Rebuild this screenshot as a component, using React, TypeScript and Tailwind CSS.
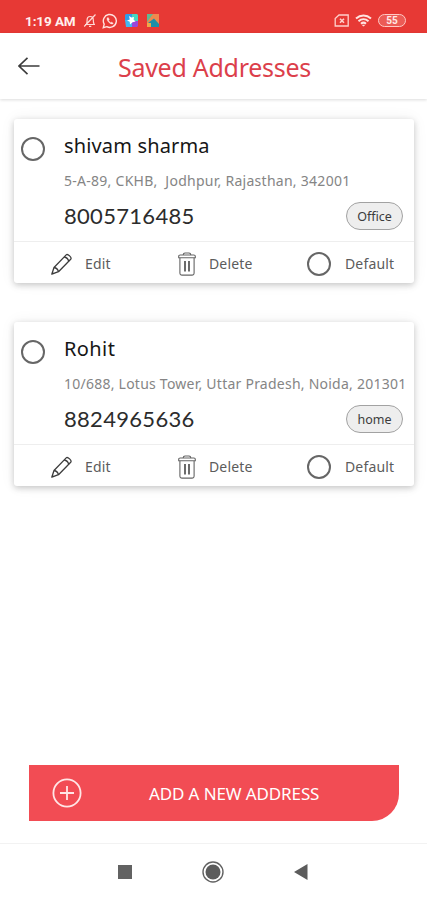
import React from "react";

type Address = {
  name: string;
  address: string;
  phone: string;
  tag: string;
  nameClass: string;
  addressClass: string;
};

const addresses: Address[] = [
  {
    name: "shivam sharma",
    address: "5-A-89, CKHB,\u00a0 Jodhpur, Rajasthan, 342001",
    phone: "8005716485",
    tag: "Office",
    nameClass: "tracking-[0.15px]",
    addressClass: "tracking-[0.27px]",
  },
  {
    name: "Rohit",
    address: "10/688, Lotus Tower, Uttar Pradesh, Noida, 201301",
    phone: "8824965636",
    tag: "home",
    nameClass: "tracking-[0.4px]",
    addressClass: "tracking-[0.24px]",
  },
];

const MutedBellIcon = () => (
  <svg className="h-[15px] w-[14px]" viewBox="0 0 14 15" fill="none" stroke="#ffd9d6" strokeWidth="1.2">
    <path d="M2 11.5h10M3.5 11c.6-1 .6-2 .6-4 0-2 1.200-3.500 3-3.500S10.300 5 10.300 7c0 2 0 3 .8 4.200M6 13.300h2.300M1.200 13.500 12.500 1.500" />
  </svg>
);

const WhatsappIcon = () => (
  <svg className="h-[16px] w-[16px]" viewBox="0 0 16 16" fill="none" stroke="#ffe3e0" strokeWidth="1.4">
    <path d="M1.300 14.700 2.200 11.200A6.500 6.500 0 1 1 4.800 13.700Z" />
    <path d="M5.200 4.800c-.8 1.600.4 3.400 1.700 4.600 1.400 1.300 3.200 2.200 4.400 1.100l-1.500-1.400-1 .6C7.800 9.200 7 8.400 6.600 7.500l.7-.9-.9-1.900Z" fill="#ffe3e0" strokeWidth="0.4" />
  </svg>
);

const StatusBar = () => (
  <div className="flex h-[33px] w-full items-center bg-[#e73935] pt-[8px] pr-[21px] pl-[25px]">
    <span className="w-[58px] whitespace-nowrap font-['Roboto',sans-serif] text-[13.5px] leading-[16px] font-bold tracking-[-0.1px] text-[#fff0ee]">
      1:19 AM
    </span>
    <MutedBellIcon />
    <span className="w-[5px]" />
    <WhatsappIcon />
    <svg className="ml-[7px] h-[13px] w-[13px]" viewBox="0 0 13 13">
      <path d="M1 0h6v7H0V1Z" fill="#2f9be8" />
      <path d="M7 0h5l1 1v6H7Z" fill="#46d6c0" />
      <path d="M0 6h7v7H1Z" fill="#42b8f0" />
      <path d="M7 7h6v5l-1 1H7Z" fill="#9a46d8" />
      <path d="m4 2 2.500 1.500L9 3l-.4 2.700 2 1.800-3 .8L5 10.500l-.3-2.700L2 6.500l2.800-1Z" fill="#fff" />
    </svg>
    <svg className="ml-[9px] h-[13px] w-[12px]" viewBox="0 0 12 13">
      <path d="M0 0h12v13H0Z" fill="#ef8a4e" />
      <path d="M0 0h6L0 8Z" fill="#62b892" />
      <path d="M7 4.500 12 10v3H1V9Z" fill="#1e8fa8" />
      <path d="M0 9h4v4H0Z" fill="#f0a848" />
    </svg>
    <div className="ml-auto flex items-center">
      <svg className="h-[13px] w-[16px]" viewBox="0 0 16 13" fill="none" stroke="#ffd0cc" strokeWidth="1.3">
        <path d="M5 1h9.200v11H1.200V4.500Z" />
        <path d="m6 4.700 4 4M10 4.700l-4 4" strokeWidth="1.600" />
      </svg>
      <svg className="ml-[5px] h-[13px] w-[17px]" viewBox="0 0 17 13" fill="none" stroke="#ffe3e0" strokeWidth="2">
        <path d="M1 4.500c4.500-4 10.500-4 15 0M3.500 7.200c3-2.700 7-2.700 10 0M6 9.700c1.600-1.400 3.400-1.400 5 0" />
        <path d="m7.300 11 1.200 1.300L9.700 11Z" fill="#ffe3e0" strokeWidth="0.5" />
      </svg>
      <span className="ml-[6px] flex h-[13px] w-[28px] items-center justify-center rounded-full border-[1.5px] border-[#ffc9c5] bg-[#ec5b56] font-['Roboto',sans-serif] text-[10px] leading-none font-bold text-[#ffe9e7]">
        55
      </span>
    </div>
  </div>
);

const Header = () => (
  <header className="flex h-[66px] w-full items-center bg-white pl-[18px] shadow-[0_1px_3px_rgba(0,0,0,0.14)]">
    <svg className="h-[20px] w-[22px]" viewBox="0 0 22 20" fill="none" stroke="#3c3c3c" strokeWidth="1.6">
      <path d="M21.500 10H1M9.500 1.800 1 10l8.500 8.200" />
    </svg>
    <h1 className="ml-[78px] pt-[2px] whitespace-nowrap font-['Noto_Sans',sans-serif] text-[25px] leading-[32px] tracking-[-0.28px] text-[#dc3f4b]">
      Saved Addresses
    </h1>
  </header>
);

const Radio = () => <span className="block h-[24px] w-[24px] shrink-0 rounded-full border-2 border-[#666]" />;

const PencilIcon = () => (
  <svg className="h-[22px] w-[22px]" viewBox="0 0 22 22" fill="none" stroke="#3c3c3c" strokeWidth="1.3" strokeLinejoin="round">
    <path d="M.8 21.200 3 14.500 15.200 1.900c1.500-1.500 6 2.700 4.500 4.400L7.500 18.700Z" />
    <path d="M3 14.500c2.100.4 4 2.100 4.500 4.200M13.200 4c2.200.4 4 2.100 4.500 4.300M1.200 19.500l1.300 1.200" />
  </svg>
);

const TrashIcon = () => (
  <svg className="h-[24px] w-[18px]" viewBox="0 0 18 24" fill="none" stroke="#656565" strokeWidth="1.1">
    <path d="M.7 5.700V4.300c0-.8.6-1.300 1.400-1.300h13.800c.8 0 1.400.5 1.400 1.300v1.400ZM5 3c.3-1.400 1-2 2-2h4c1 0 1.700.6 2 2" />
    <path d="M1.900 6v15.200c0 1.200.8 1.900 1.900 1.900h10.400c1.100 0 1.900-.7 1.900-1.900V6" />
    <path d="M7 9v10.500M11 9v10.500" strokeWidth="1.900" />
  </svg>
);

const AddressCard = ({ item }: { item: Address }) => (
  <section className="flex h-[164px] w-[400px] flex-col rounded-[3px] bg-white font-['Noto_Sans',sans-serif] shadow-[0_2px_6px_rgba(0,0,0,0.2),0_0_16px_rgba(0,0,0,0.06)]">
    <div className="flex h-[123px] border-b border-[#eeeeee] pl-[7px]">
      <div className="w-[43px] pt-[18px]">
        <Radio />
      </div>
      <div className="flex-1">
        <h2 className={`pt-[12px] text-[20px] leading-[30px] whitespace-nowrap text-[#161616] ${item.nameClass}`}>{item.name}</h2>
        <p className={`pt-[10px] text-[14px] leading-[20px] whitespace-nowrap text-[#858585] ${item.addressClass}`}>{item.address}</p>
        <div className="flex items-center justify-between pt-[11px] pr-[11px]">
          <span className="font-['Lato',sans-serif] text-[22px] leading-[28px] tracking-[0.3px] text-[#2c2c2c]">{item.phone}</span>
          <span className="flex h-[28px] w-[57px] items-center justify-center rounded-full border border-[#a2a2a2] bg-[#eeeeee] pt-[2px] text-[12.500px] leading-none text-[#3c3c3c]">
            {item.tag}
          </span>
        </div>
      </div>
    </div>
    <div className="flex h-[41px] items-center pt-[3px] pl-[37px] text-[14px] leading-[20px] tracking-[0.15px] text-[#5c5c5c]">
      <PencilIcon />
      <span className="ml-[12px] w-[93px]">Edit</span>
      <TrashIcon />
      <span className="ml-[13px] w-[98px]">Delete</span>
      <Radio />
      <span className="ml-[14px]">Default</span>
    </div>
  </section>
);

const App = () => {
  return (
    <main className="flex h-[900px] w-[427px] flex-col overflow-hidden bg-white">
      <StatusBar />
      <Header />
      <div className="flex h-[666px] flex-col gap-[39px] pt-[20px] pl-[14px]">
        {addresses.map((item) => (
          <AddressCard key={item.phone} item={item} />
        ))}
      </div>
      <div className="px-[29px]">
        <button className="flex h-[56px] w-[370px] items-center rounded-br-[27px] bg-[#f24c54] pl-[23px] text-white">
          <svg className="h-[30px] w-[30px]" viewBox="0 0 30 30" fill="none" stroke="#ffe6e6" strokeWidth="1.8">
            <circle cx="15" cy="15" r="13.600" />
            <path d="M15 8v14M8 15h14" />
          </svg>
          <span className="ml-[67px] pt-[2px] font-['Noto_Sans',sans-serif] text-[17px] leading-[24px] tracking-[-0.12px] whitespace-nowrap">ADD A NEW ADDRESS</span>
        </button>
      </div>
      <nav className="mt-[22px] flex h-[57px] items-center border-t border-[#f2f2f2] pl-[118px]">
        <span className="h-[14px] w-[14px] bg-[#626262]" />
        <svg className="ml-[70px] h-[22px] w-[22px]" viewBox="0 0 22 22">
          <circle cx="11" cy="11" r="10" fill="none" stroke="#626262" strokeWidth="1.400" />
          <circle cx="11" cy="11" r="7.500" fill="#5c5c5c" />
        </svg>
        <svg className="ml-[70px] h-[16px] w-[14px]" viewBox="0 0 14 16">
          <path d="M0 8 13.500 0v16Z" fill="#5c5c5c" />
        </svg>
      </nav>
    </main>
  );
};

export default App;
